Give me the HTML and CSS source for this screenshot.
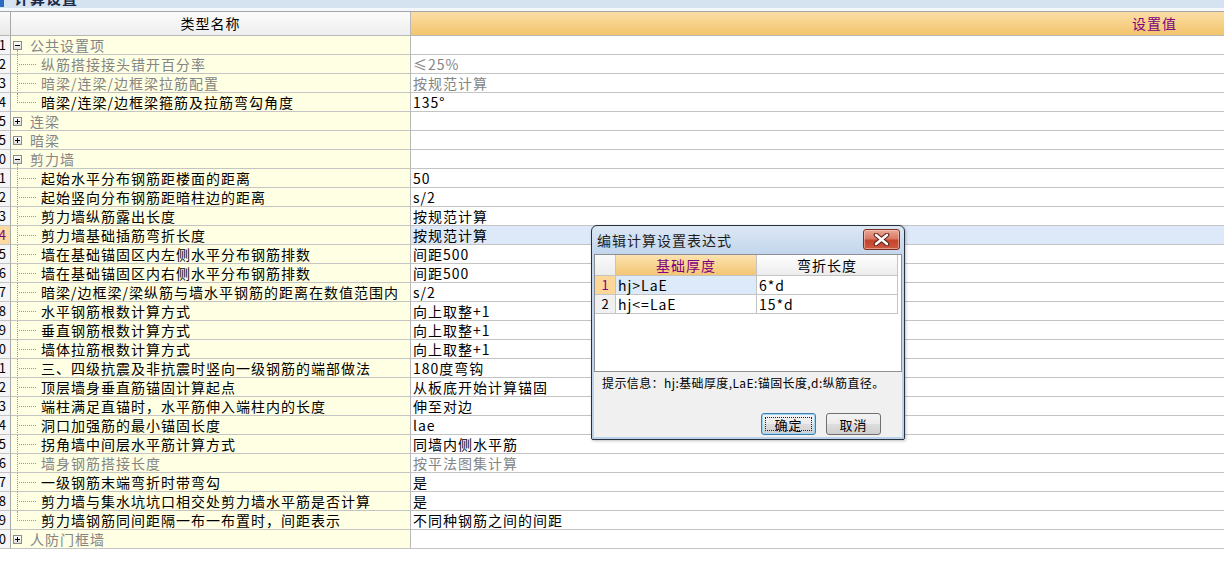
FILE: index.html
```html
<!DOCTYPE html>
<html lang="zh">
<head>
<meta charset="utf-8">
<title>计算设置</title>
<link rel="stylesheet" href="styles.css">
</head>
<body>
<div class="topbar"><span class="app-icon"></span><span class="top-title">计算设置</span></div>
<div class="topgap"></div>

<div class="sheet">
  <div class="row head">
    <div class="rn h"></div>
    <div class="name h">类型名称</div>
    <div class="val h">设置值</div>
  </div>

  <div class="row"><div class="rn">1</div><div class="name cat"><span class="box minus open"></span><span class="gray">公共设置项</span></div><div class="val"></div></div>
  <div class="row"><div class="rn">2</div><div class="name"><span class="tree"></span><span class="gray">纵筋搭接接头错开百分率</span></div><div class="val gray">≤25%</div></div>
  <div class="row"><div class="rn">3</div><div class="name"><span class="tree"></span><span class="gray">暗梁/连梁/边框梁拉筋配置</span></div><div class="val gray">按规范计算</div></div>
  <div class="row"><div class="rn">4</div><div class="name"><span class="tree last"></span>暗梁/连梁/边框梁箍筋及拉筋弯勾角度</div><div class="val">135°</div></div>
  <div class="row"><div class="rn">5</div><div class="name cat"><span class="box plus"></span><span class="gray">连梁</span></div><div class="val"></div></div>
  <div class="row"><div class="rn">5</div><div class="name cat"><span class="box plus"></span><span class="gray">暗梁</span></div><div class="val"></div></div>
  <div class="row"><div class="rn">0</div><div class="name cat"><span class="box minus open"></span><span class="gray">剪力墙</span></div><div class="val"></div></div>
  <div class="row"><div class="rn">1</div><div class="name"><span class="tree"></span>起始水平分布钢筋距楼面的距离</div><div class="val">50</div></div>
  <div class="row"><div class="rn">2</div><div class="name"><span class="tree"></span>起始竖向分布钢筋距暗柱边的距离</div><div class="val">s/2</div></div>
  <div class="row"><div class="rn">3</div><div class="name"><span class="tree"></span>剪力墙纵筋露出长度</div><div class="val">按规范计算</div></div>
  <div class="row"><div class="rn cur">4</div><div class="name"><span class="tree"></span>剪力墙基础插筋弯折长度</div><div class="val cur">按规范计算</div></div>
  <div class="row"><div class="rn">5</div><div class="name"><span class="tree"></span>墙在基础锚固区内左侧水平分布钢筋排数</div><div class="val">间距500</div></div>
  <div class="row"><div class="rn">6</div><div class="name"><span class="tree"></span>墙在基础锚固区内右侧水平分布钢筋排数</div><div class="val">间距500</div></div>
  <div class="row"><div class="rn">7</div><div class="name"><span class="tree"></span>暗梁/边框梁/梁纵筋与墙水平钢筋的距离在数值范围内</div><div class="val">s/2</div></div>
  <div class="row"><div class="rn">8</div><div class="name"><span class="tree"></span>水平钢筋根数计算方式</div><div class="val">向上取整+1</div></div>
  <div class="row"><div class="rn">9</div><div class="name"><span class="tree"></span>垂直钢筋根数计算方式</div><div class="val">向上取整+1</div></div>
  <div class="row"><div class="rn">0</div><div class="name"><span class="tree"></span>墙体拉筋根数计算方式</div><div class="val">向上取整+1</div></div>
  <div class="row"><div class="rn">1</div><div class="name"><span class="tree"></span>三、四级抗震及非抗震时竖向一级钢筋的端部做法</div><div class="val">180度弯钩</div></div>
  <div class="row"><div class="rn">2</div><div class="name"><span class="tree"></span>顶层墙身垂直筋锚固计算起点</div><div class="val">从板底开始计算锚固</div></div>
  <div class="row"><div class="rn">3</div><div class="name"><span class="tree"></span>端柱满足直锚时，水平筋伸入端柱内的长度</div><div class="val">伸至对边</div></div>
  <div class="row"><div class="rn">4</div><div class="name"><span class="tree"></span>洞口加强筋的最小锚固长度</div><div class="val">lae</div></div>
  <div class="row"><div class="rn">5</div><div class="name"><span class="tree"></span>拐角墙中间层水平筋计算方式</div><div class="val">同墙内侧水平筋</div></div>
  <div class="row"><div class="rn">6</div><div class="name"><span class="tree"></span><span class="gray">墙身钢筋搭接长度</span></div><div class="val gray">按平法图集计算</div></div>
  <div class="row"><div class="rn">7</div><div class="name"><span class="tree"></span>一级钢筋末端弯折时带弯勾</div><div class="val">是</div></div>
  <div class="row"><div class="rn">8</div><div class="name"><span class="tree"></span>剪力墙与集水坑坑口相交处剪力墙水平筋是否计算</div><div class="val">是</div></div>
  <div class="row"><div class="rn">9</div><div class="name"><span class="tree last"></span>剪力墙钢筋同间距隔一布一布置时，间距表示</div><div class="val">不同种钢筋之间的间距</div></div>
  <div class="row"><div class="rn">0</div><div class="name cat"><span class="box plus"></span><span class="gray">人防门框墙</span></div><div class="val"></div></div>
</div>

<div class="dialog">
  <div class="dlg-title">
    <span class="dlg-caption">编辑计算设置表达式</span>
    <span class="close">
      <svg width="19" height="13" viewBox="0 0 19 13">
        <path d="M4 2 L15 11 M15 2 L4 11" stroke="#5a1d12" stroke-width="4.6" stroke-linecap="round" fill="none"/>
        <path d="M4 2 L15 11 M15 2 L4 11" stroke="#ffffff" stroke-width="2.6" stroke-linecap="round" fill="none"/>
      </svg>
    </span>
  </div>
  <div class="dlg-body">
    <div class="dgrid">
      <div class="drow dhead">
        <div class="drn"></div>
        <div class="dc1 dh1">基础厚度</div>
        <div class="dc2 dh2">弯折长度</div>
      </div>
      <div class="drow">
        <div class="drn sel">1</div>
        <div class="dc1 sel">hj&gt;LaE</div>
        <div class="dc2">6*d</div>
      </div>
      <div class="drow">
        <div class="drn">2</div>
        <div class="dc1">hj&lt;=LaE</div>
        <div class="dc2">15*d</div>
      </div>
    </div>
    <div class="hint">提示信息：hj:基础厚度,LaE:锚固长度,d:纵筋直径。</div>
    <div class="btns">
      <span class="btn default">确定</span>
      <span class="btn">取消</span>
    </div>
  </div>
</div>
</body>
</html>
```

FILE: styles.css
```css
* { box-sizing: border-box; }

body {
  margin: 0;
  width: 1224px;
  height: 568px;
  overflow: hidden;
  background: #ffffff;
  font-family: "Noto Sans CJK SC", "Noto Sans", sans-serif;
  font-size: 14px;
  letter-spacing: 1px;
  color: #000;
  position: relative;
}

.topbar {
  height: 8px;
  background: #d5e2ef;
  overflow: hidden;
  display: flex;
}
.app-icon {
  width: 4px;
  height: 7px;
  background: #2c6cc0;
  flex: none;
}
.top-title {
  margin-left: 10px;
  margin-top: -11px;
  font-weight: bold;
  font-size: 15px;
  line-height: 18px;
  color: #182a48;
}
.topgap {
  height: 4px;
  background: #f4f7fb;
  border-bottom: 1px solid #a6a6a6;
}

.sheet { display: flex; flex-direction: column; }

.row { display: flex; height: 19px; }
.row.head { height: 24px; }

.rn {
  width: 11px;
  flex: none;
  border-right: 1px solid #a8a8a8;
  border-bottom: 1px solid #c4c4c4;
  background: #f5f5f5;
  display: flex;
  justify-content: flex-end;
  overflow: hidden;
  padding-right: 4px;
  font-size: 13px;
  line-height: 18px;
  letter-spacing: 0;
}
.rn.h { background: linear-gradient(#fafafa, #e9e9e9); border-bottom-color: #b8b8b8; }
.rn.cur { background: #fcd9a0; color: #800080; }

.name {
  width: 400px;
  flex: none;
  border-right: 1px solid #b8b8b8;
  border-bottom: 1px solid #c4c4c4;
  background: #ffffe3;
  white-space: nowrap;
  overflow: hidden;
  display: flex;
  align-items: center;
  line-height: 18px;
}
.name.h {
  justify-content: center;
  background: linear-gradient(#fbfbfb, #eeeeee);
  border-bottom-color: #b8b8b8;
  line-height: 23px;
}
.name.cat { padding-left: 2px; }

.val {
  flex: 1;
  border-bottom: 1px solid #c4c4c4;
  padding-left: 2px;
  white-space: nowrap;
  overflow: hidden;
  line-height: 18px;
}
.val.h {
  background: linear-gradient(#fbdea6, #f2c46c);
  color: #800080;
  padding-left: 721px;
  line-height: 23px;
  border-bottom-color: #b8b8b8;
}
.val.cur { background: #dde9f9; }

.gray { color: #858585; }

/* tree connectors */
.tree {
  width: 30px;
  height: 18px;
  flex: none;
  position: relative;
}
.tree::before {
  content: "";
  position: absolute;
  left: 6px;
  top: 0;
  height: 19px;
  border-left: 1px dotted #9a9a9a;
}
.tree.last::before { height: 10px; }
.tree::after {
  content: "";
  position: absolute;
  left: 8px;
  top: 9px;
  width: 17px;
  border-top: 1px dotted #9a9a9a;
}

/* expand boxes */
.box {
  width: 9px;
  height: 9px;
  flex: none;
  border: 1px solid #8a8a8a;
  background: linear-gradient(#ffffff, #dedede);
  margin-right: 8px;
  position: relative;
}
.box::before {
  content: "";
  position: absolute;
  left: 1px;
  top: 3px;
  width: 5px;
  height: 1px;
  background: #000;
}
.box.plus::after {
  content: "";
  position: absolute;
  left: 3px;
  top: 1px;
  width: 1px;
  height: 5px;
  background: #000;
}
.box.open { overflow: visible; }
.box.open::after {
  content: "";
  position: absolute;
  left: 3px;
  top: 8px;
  height: 6px;
  border-left: 1px dotted #9a9a9a;
}

/* dialog */
.dialog {
  position: absolute;
  left: 591px;
  top: 225px;
  width: 314px;
  height: 215px;
  border: 1px solid #28323c;
  border-radius: 6px 6px 2px 2px;
  background: linear-gradient(#dce7f4, #c3d6ec 28px, #bcd1ea);
  padding: 0 2px 2px;
  display: flex;
  flex-direction: column;
  box-shadow: 1px 1px 3px rgba(0, 0, 0, 0.25);
}
.dlg-title {
  height: 28px;
  flex: none;
  display: flex;
  justify-content: space-between;
  align-items: flex-start;
}
.dlg-caption {
  padding-left: 3px;
  line-height: 28px;
  color: #1c1c1c;
}
.close {
  width: 37px;
  height: 21px;
  margin-top: 3px;
  margin-right: 2px;
  border: 1px solid #7d2e1f;
  border-radius: 3px;
  background: linear-gradient(#eaa897, #d97a64 45%, #c4442b 55%, #cc5a42);
  display: flex;
  align-items: center;
  justify-content: center;
  box-shadow: inset 0 0 0 1px rgba(255, 220, 210, 0.5);
}
.dlg-body {
  flex: 1;
  background: #f0f0f0;
  display: flex;
  flex-direction: column;
}
.dgrid {
  height: 118px;
  flex: none;
  border: 1px solid #8d8f92;
  background: #ffffff;
}
.drow { display: flex; height: 19px; }
.drow.dhead { height: 21px; }
.drn {
  width: 21px;
  flex: none;
  border-right: 1px solid #c4c4c4;
  border-bottom: 1px solid #c4c4c4;
  background: #f0f0f0;
  text-align: center;
  line-height: 18px;
  font-size: 13px;
  letter-spacing: 0;
}
.dhead .drn { background: linear-gradient(#fafafa, #ececec); }
.drn.sel { background: #fcd797; color: #800080; }
.dc1, .dc2 {
  width: 141px;
  flex: none;
  border-right: 1px solid #c4c4c4;
  border-bottom: 1px solid #c4c4c4;
  padding-left: 2px;
  line-height: 18px;
  white-space: nowrap;
}
.dh1, .dh2 { text-align: center; padding-left: 0; line-height: 20px; }
.dh1 { background: linear-gradient(#fce3b0, #f3c674); color: #800080; }
.dh2 { background: linear-gradient(#ffffff, #ececec); }
.dc1.sel { background: #dceaf9; }

.hint {
  height: 41px;
  flex: none;
  padding-left: 8px;
  padding-top: 3px;
  font-size: 12px;
  line-height: 16px;
  letter-spacing: 0.4px;
  white-space: nowrap;
  color: #000;
}
.btns {
  height: 22px;
  flex: none;
  display: flex;
  justify-content: flex-end;
  gap: 10px;
  padding-right: 21px;
}
.btn {
  width: 55px;
  height: 22px;
  border: 1px solid #707070;
  border-radius: 3px;
  background: linear-gradient(#f3f3f3, #ebebeb 48%, #dddddd 52%, #cfcfcf);
  display: flex;
  align-items: center;
  justify-content: center;
  font-size: 13px;
  position: relative;
}
.btn.default {
  border-color: #3c7fb1;
  box-shadow: inset 0 0 0 1px #9fd3f2;
}
.btn.default::after {
  content: "";
  position: absolute;
  left: 3px;
  top: 3px;
  right: 3px;
  bottom: 3px;
  border: 1px dotted #222;
}
```
